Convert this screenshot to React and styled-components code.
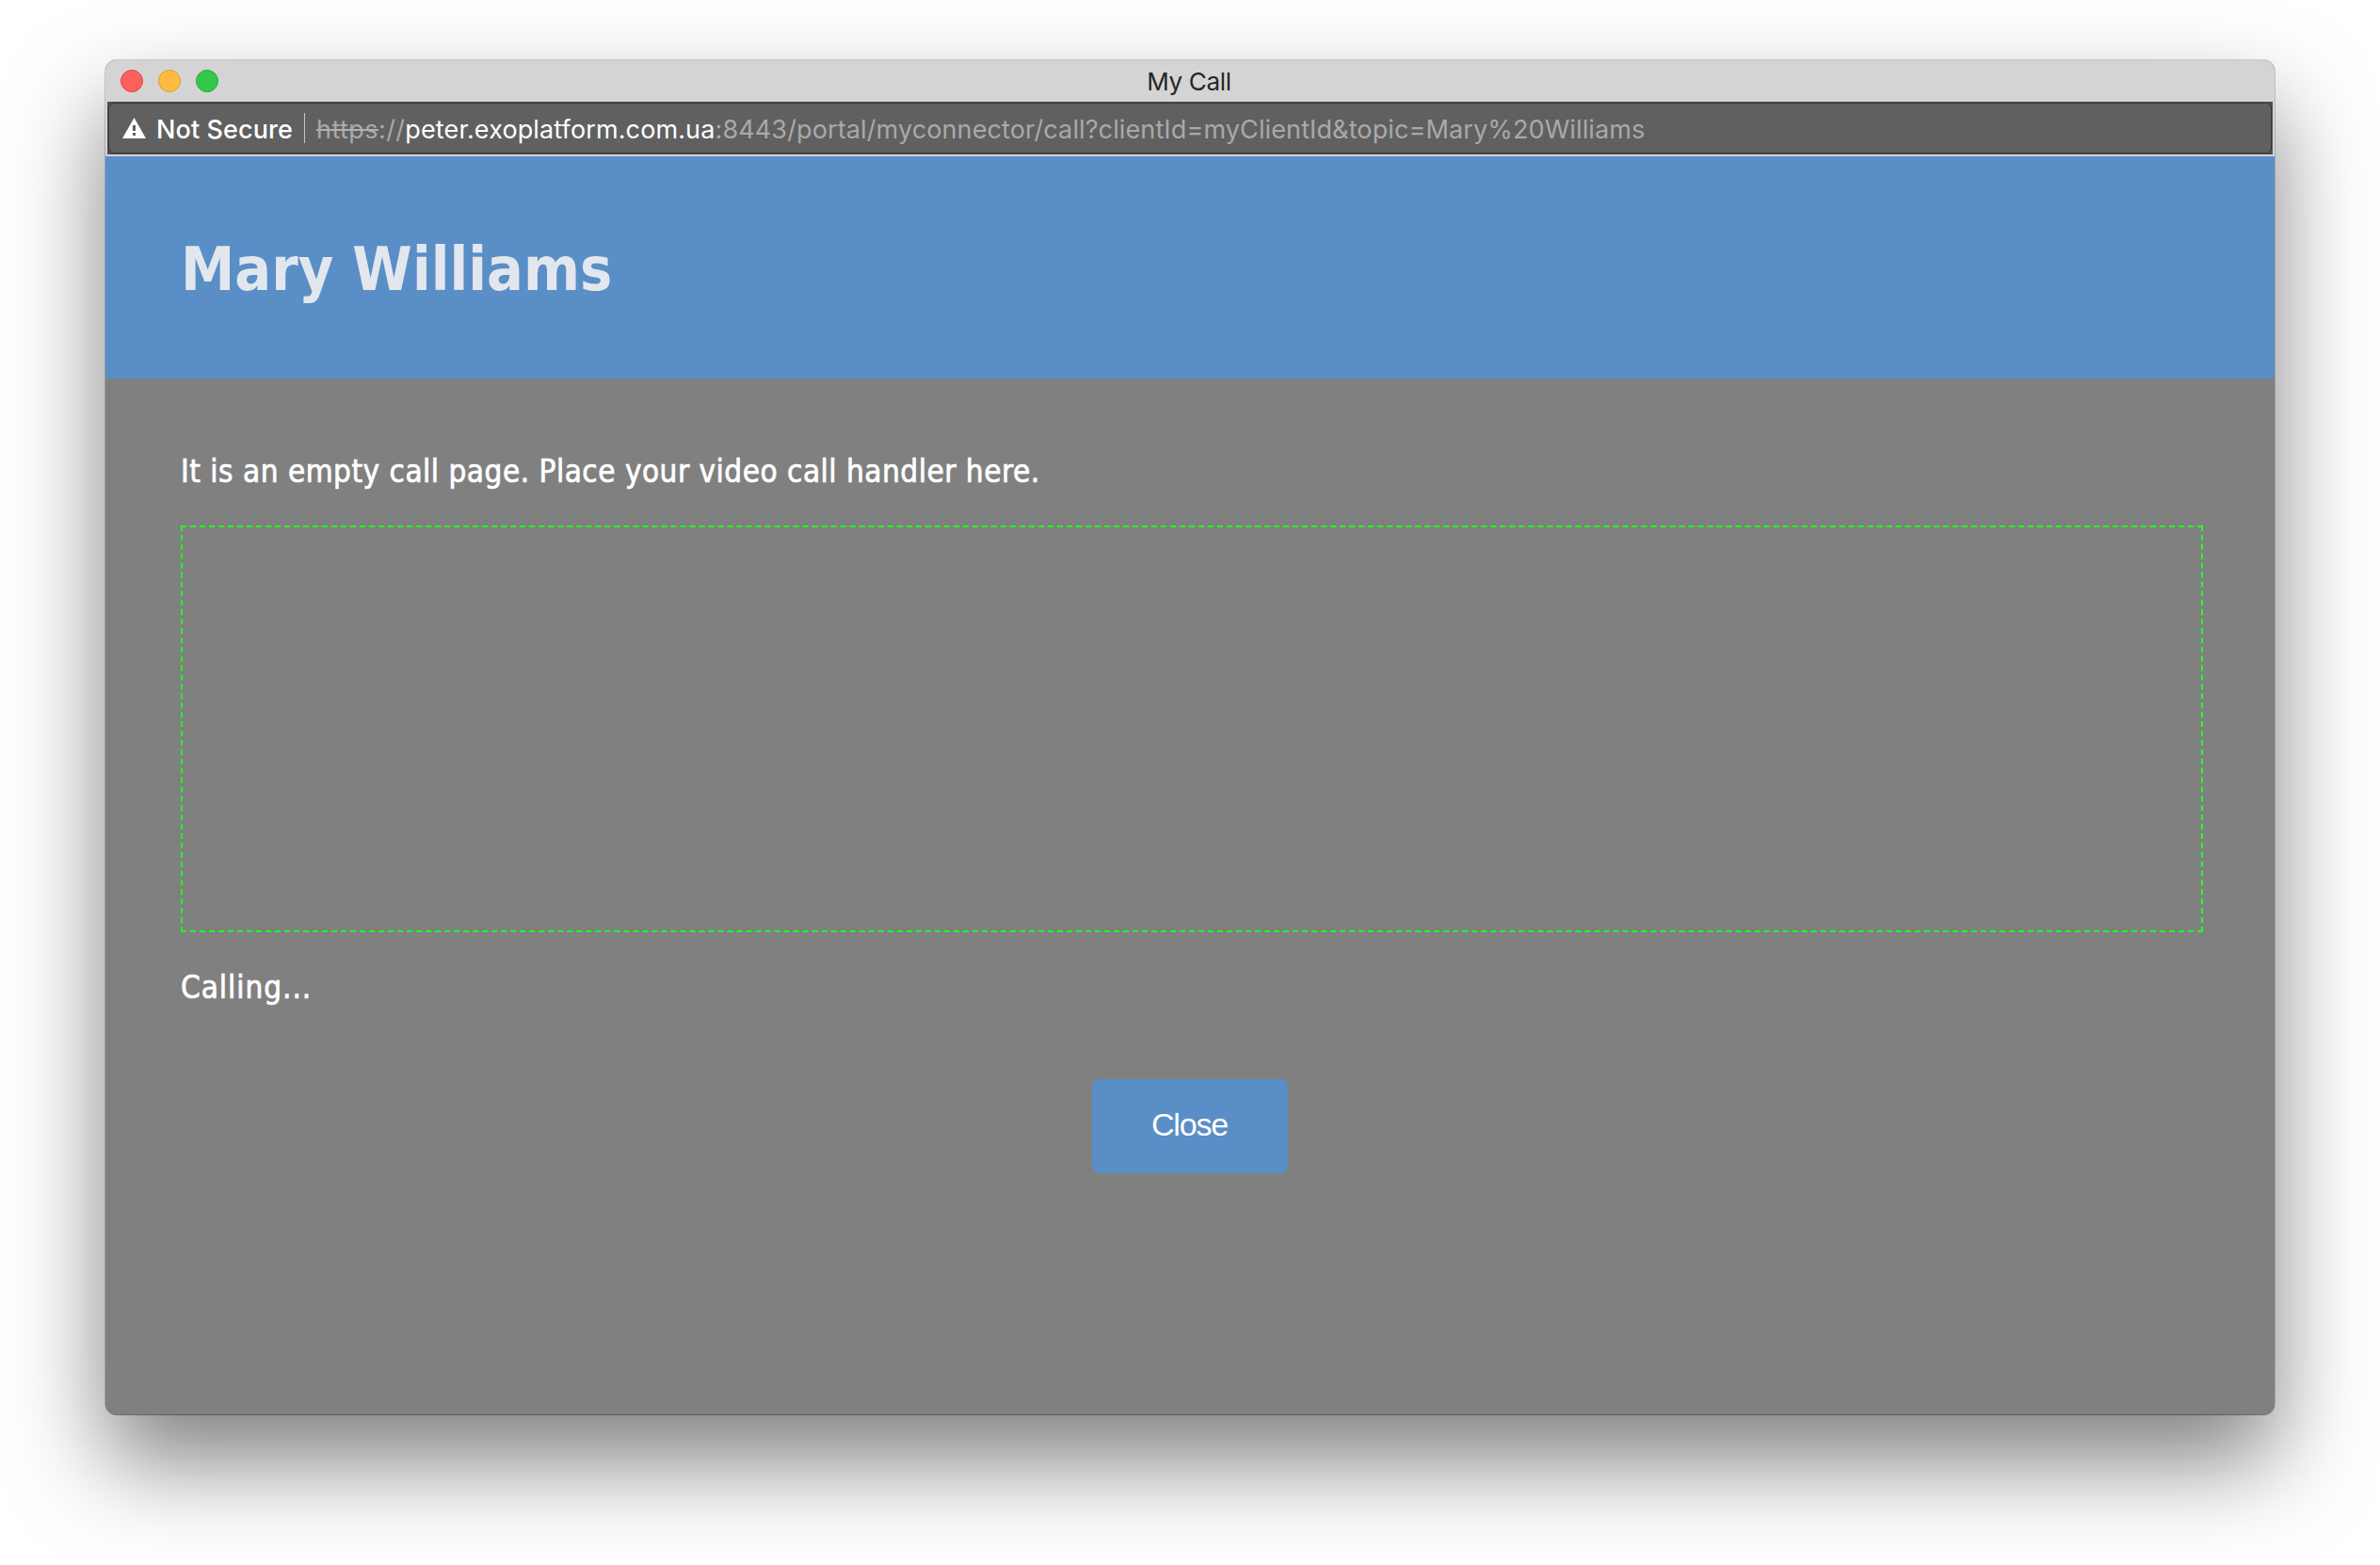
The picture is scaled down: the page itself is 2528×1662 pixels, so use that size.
import React from 'react';
import styled, { createGlobalStyle } from 'styled-components';

const GlobalStyle = createGlobalStyle`
  *, *::before, *::after { box-sizing: border-box; }
  html, body { margin: 0; padding: 0; background: #fff; }
  body { overflow: hidden; }
`;

const ui = `Inter, Roboto, 'Liberation Sans', sans-serif`;
const humanist = `'DejaVu Sans Condensed', 'DejaVu Sans', sans-serif`;

const Desktop = styled.main`
  width: 2528px;
  height: 1662px;
  padding: 64px 112px 0;
  background: #fff;
  overflow: hidden;
`;

const Window = styled.section`
  display: flex;
  flex-direction: column;
  width: 2304px;
  height: 1438px;
  border-radius: 12px;
  background: #808080;
  box-shadow:
    0 0 0 1px rgba(0, 0, 0, 0.17),
    0 1px 0 0 rgba(0, 0, 0, 0.28),
    0 50px 100px rgba(0, 0, 0, 0.5);
`;

const TitleBar = styled.header`
  display: grid;
  grid-template-columns: 1fr auto 1fr;
  align-items: center;
  height: 44px;
  padding: 0 16px;
  border-radius: 12px 12px 0 0;
  background: #d4d4d4;
`;

const Lights = styled.div`
  display: flex;
  gap: 16px;
`;

const Light = styled.span`
  width: 24px;
  height: 24px;
  border-radius: 50%;
  border: 1px solid ${(p) => p.$edge};
  background: ${(p) => p.$fill};
`;

const WindowTitle = styled.span`
  padding-top: 2px;
  margin-right: 2px;
  font: 400 26px/40px ${ui};
  letter-spacing: -0.32px;
  color: #262626;
`;

const Chrome = styled.div`
  height: 58px;
  padding: 0 2px 2px;
  background: #d4d4d4;
`;

const AddressFrame = styled.div`
  height: 56px;
  padding: 1px;
  background: #4e4e4e;
`;

const Address = styled.div`
  display: flex;
  align-items: center;
  height: 54px;
  padding: 0 14px;
  border: 1px solid #383838;
  border-radius: 6px;
  background: #606060;
  font: 400 27px/40px ${ui};
  white-space: nowrap;
`;

const Warning = styled.svg`
  width: 25px;
  height: 22px;
  flex: none;
`;

const Security = styled.span`
  width: 157px;
  margin-left: 11px;
  padding-top: 3px;
  font-weight: 500;
  letter-spacing: 0.1px;
  color: #fff;
`;

const Divider = styled.span`
  width: 1px;
  height: 32px;
  background: #c4c4c4;
`;

const Url = styled.span`
  margin-left: 12px;
  padding-top: 3px;
  letter-spacing: 0.12px;
  color: #a9a9a9;
`;

const Scheme = styled.s`
  letter-spacing: 0.45px;
  text-decoration: line-through 2px #b0b0b0;
`;

const Slashes = styled.span`
  letter-spacing: 0.35px;
`;

const Host = styled.span`
  color: #fff;
`;

const Banner = styled.div`
  display: flex;
  align-items: center;
  height: 236px;
  padding: 4px 80px 0;
  background: #5a8ec7;
`;

const Caller = styled.h1`
  margin: 0;
  font: 700 64px/90px ${humanist};
  letter-spacing: 0.05px;
  color: #e2e7ee;
`;

const Body = styled.div`
  display: flex;
  flex-direction: column;
  padding: 76px 76px 0 80px;
`;

const Message = styled.p`
  margin: 0;
  font: 400 33px/46px ${humanist};
  letter-spacing: ${(p) => p.$tracking};
  -webkit-text-stroke: 0.7px #fff;
  color: #fff;
`;

const VideoArea = styled.div`
  height: 432px;
  margin: 34px 0 36px;
  border: 2px dashed #21ff21;
`;

const CloseButton = styled.button`
  align-self: center;
  width: 208px;
  height: 100px;
  margin: 74px 4px 0 0;
  padding: 0 1px 4px 0;
  border: 0;
  border-radius: 8px;
  background: #5a8ec7;
  color: #fff;
  font: 400 34px/40px 'Liberation Sans', Arial, sans-serif;
  letter-spacing: -1.15px;
`;

export default function App() {
  return (
    <>
      <GlobalStyle />
      <Desktop>
        <Window>
          <TitleBar>
            <Lights>
              <Light $fill="#fc605c" $edge="#de4643" />
              <Light $fill="#fdbc40" $edge="#dd9d33" />
              <Light $fill="#34c84a" $edge="#27a934" />
            </Lights>
            <WindowTitle>My Call</WindowTitle>
          </TitleBar>
          <Chrome>
            <AddressFrame>
              <Address>
                <Warning viewBox="0 0 25 22" aria-hidden="true">
                  <path
                    fill="#fff"
                    fillRule="evenodd"
                    d="M12.5 0L25 22H0ZM11 8V14H14V8ZM11 16V19H14V16Z"
                  />
                </Warning>
                <Security>Not Secure</Security>
                <Divider />
                <Url>
                  <Scheme>https</Scheme>
                  <Slashes>://</Slashes>
                  <Host>peter.exoplatform.com.ua</Host>
                  :8443/portal/myconnector/call?clientId=myClientId&amp;topic=Mary%20Williams
                </Url>
              </Address>
            </AddressFrame>
          </Chrome>
          <Banner>
            <Caller>Mary Williams</Caller>
          </Banner>
          <Body>
            <Message $tracking="0.5px">
              It is an empty call page. Place your video call handler here.
            </Message>
            <VideoArea />
            <Message $tracking="0.95px">Calling...</Message>
            <CloseButton type="button">Close</CloseButton>
          </Body>
        </Window>
      </Desktop>
    </>
  );
}
